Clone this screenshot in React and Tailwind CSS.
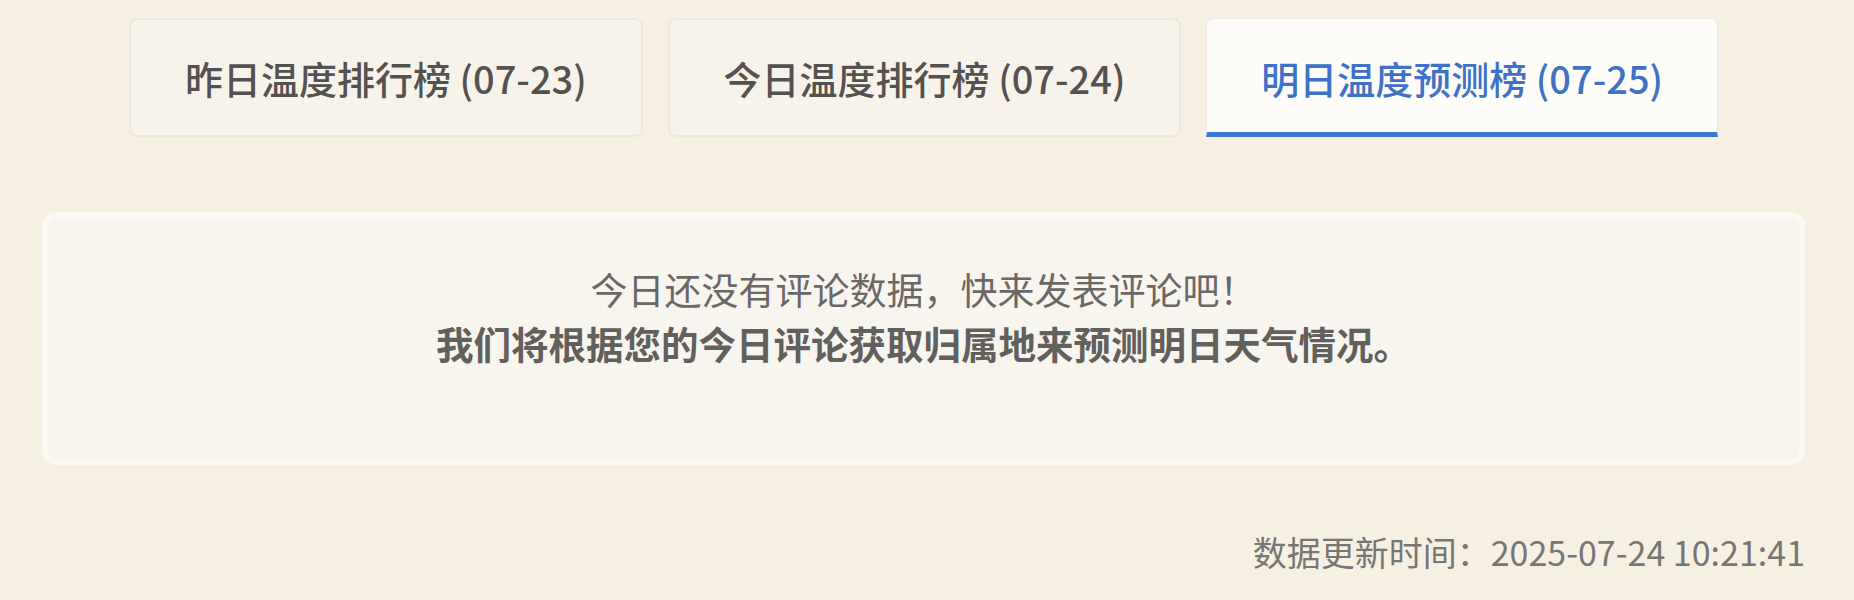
const tabs = [
  { label: '昨日温度排行榜 (07-23)', active: false },
  { label: '今日温度排行榜 (07-24)', active: false },
  { label: '明日温度预测榜 (07-25)', active: true },
]

export default function App() {
  return (
    <div
      className="min-h-[600px] w-full bg-[#f6f0e3] pt-[18px]"
      style={{ fontFamily: '"Noto Sans CJK SC", "Noto Sans", sans-serif' }}
    >
      <div className="ml-[42px] w-[1763px]">
        {/* Tabs */}
        <div className="flex gap-[25px] px-[87px]">
          {tabs.map(({ label, active }) => (
            <button
              key={label}
              className={`flex-1 h-[119px] flex items-center justify-center text-[38px] font-medium ${
                active
                  ? 'bg-[#fdfcf9] text-[#3d72c6] rounded-t-[8px] border border-[#f1ece1] border-b-[5px] border-b-[#3a78d2] pt-[4px]'
                  : 'bg-[#f8f3ea] text-[#545250] rounded-[8px] border-2 border-[#eee8dc]'
              }`}
            >
              {label}
            </button>
          ))}
        </div>

        {/* Empty state */}
        <div className="mt-[75px] h-[253px] rounded-[14px] bg-[#f8f5ee] border-[6px] border-[#fcf9f2] pt-[45px] text-center">
          <p className="text-[37px] leading-[53px] text-[#6a6866]">今日还没有评论数据，快来发表评论吧！</p>
          <p className="text-[37.5px] leading-[53px] font-bold text-[#62605d]">我们将根据您的今日评论获取归属地来预测明日天气情况。</p>
        </div>

        {/* Footer */}
        <p className="mt-[61px] text-right text-[34px] leading-[51px] text-[#787673]">
          数据更新时间：2025-07-24 10:21:41
        </p>
      </div>
    </div>
  )
}
